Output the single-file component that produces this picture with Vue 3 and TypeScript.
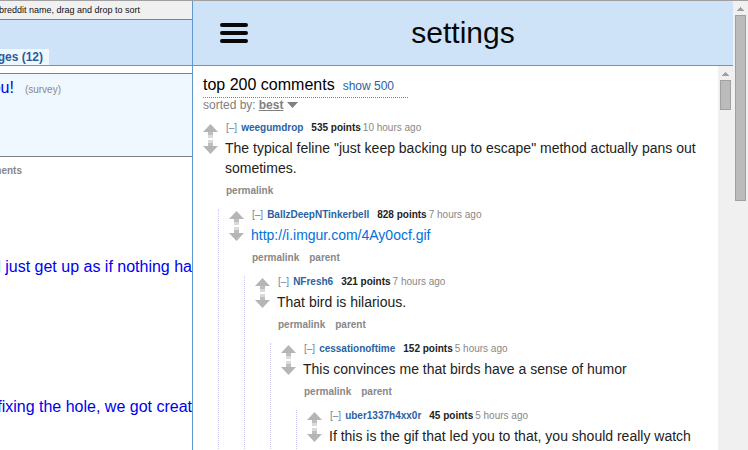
<script setup lang="ts">
interface Comment {
  author: string
  points: number
  age: string
  text: string
  href?: string
}

interface Row extends Comment {
  depth: number
}

const thread: Comment[] = [
  { author: 'weegumdrop', points: 535, age: '10 hours ago', text: 'The typical feline "just keep backing up to escape" method actually pans out sometimes.' },
  { author: 'BallzDeepNTinkerbell', points: 828, age: '7 hours ago', text: 'http://i.imgur.com/4Ay0ocf.gif', href: 'http://i.imgur.com/4Ay0ocf.gif' },
  { author: 'NFresh6', points: 321, age: '7 hours ago', text: 'That bird is hilarious.' },
  { author: 'cessationoftime', points: 152, age: '5 hours ago', text: 'This convinces me that birds have a sense of humor' },
  { author: 'uber1337h4xx0r', points: 45, age: '5 hours ago', text: 'If this is the gif that led you to that, you should really watch' },
]

const rows: Row[] = thread.map((comment, depth) => ({ ...comment, depth }))
</script>

<template>
  <div class="page">
    <section class="listing">
      <div class="hint"><span>breddit name, drag and drop to sort</span></div>
      <div class="tabs"><a class="tab" href="#">ges (12)</a></div>
      <div class="promo">
        <a class="title" href="#">ou!</a>
        <span class="domain">(survey)</span>
      </div>
      <div class="posts">
        <a class="count" href="#">ments</a>
        <a class="title post" href="#">l just get up as if nothing ha</a>
        <a class="title post" href="#">fixing the hole, we got creat</a>
      </div>
    </section>

    <main class="panel">
      <header class="bar">
        <button class="menu" type="button" aria-label="Menu">
          <svg width="28" height="20" viewBox="0 0 28 20">
            <path d="M2 2H26M2 10H26M2 18H26" stroke="#080808" stroke-width="4" stroke-linecap="round" />
          </svg>
        </button>
        <h1>settings</h1>
      </header>
      <div class="viewport">
        <div class="comments">
          <div class="summary">
            <h2>top 200 comments</h2>
            <a href="#">show 500</a>
          </div>
          <div class="sort">
            sorted by: <button type="button"><b>best</b><svg width="11" height="6" viewBox="0 0 11 6"><path d="M0 0H11L5.500 6Z" fill="#808080" /></svg></button>
          </div>
          <div class="thread">
            <div class="guides">
              <span v-for="n in 4" :key="n" class="guide" :class="'start-' + n"></span>
            </div>
            <article v-for="row in rows" :key="row.author" class="comment" :style="{ marginLeft: row.depth * 26 + 'px' }">
              <div class="votes">
                <button type="button" aria-label="Upvote">
                  <svg width="15" height="14" viewBox="0 0 15 14"><path d="M7.500 0L15 8H0Z" fill="#b5b5b5" /><path d="M5 8H10V11H5Z" fill="#bebebe" /><path d="M5 11H10V14H5Z" fill="#dadada" /></svg>
                </button>
                <button type="button" aria-label="Downvote">
                  <svg width="15" height="14" viewBox="0 0 15 14"><path d="M7.500 14L15 6H0Z" fill="#b5b5b5" /><path d="M5 3H10V6H5Z" fill="#bebebe" /><path d="M5 0H10V3H5Z" fill="#dadada" /></svg>
                </button>
              </div>
              <div class="entry">
                <div class="meta">
                  <a class="collapse" href="#">[–]</a>
                  <a class="author" href="#">{{ row.author }}</a>
                  <b>{{ row.points }} points</b>
                  <span>{{ row.age }}</span>
                </div>
                <p><a v-if="row.href" :href="row.href">{{ row.text }}</a><template v-else>{{ row.text }}</template></p>
                <div class="actions">
                  <a href="#">permalink</a>
                  <a v-if="row.depth > 0" href="#">parent</a>
                </div>
              </div>
            </article>
          </div>
        </div>
        <div class="scrollbar">
          <svg width="7" height="4" viewBox="0 0 7 4"><path d="M3 0H4V1H5V2H6V3H7V4H0V3H1V2H2V1H3Z" fill="#a0a0a0" /></svg>
          <span class="thumb short"></span>
        </div>
      </div>
    </main>

    <div class="scrollbar outer">
      <svg width="7" height="4" viewBox="0 0 7 4"><path d="M3 0H4V1H5V2H6V3H7V4H0V3H1V2H2V1H3Z" fill="#a0a0a0" /></svg>
      <span class="thumb long"></span>
    </div>
  </div>
</template>

<style>
body {
  overflow: hidden;
}
</style>

<style scoped>
.page {
  display: flex;
  box-sizing: border-box;
  height: 100vh;
  overflow: hidden;
  border-top: 1px solid #a0a0a0;
  background: #fff;
  color: #222;
  font-family: "Liberation Sans", Arial, sans-serif;
}
a {
  color: inherit;
  text-decoration: none;
}
button {
  padding: 0;
  border: 0;
  background: none;
  color: inherit;
  font: inherit;
  cursor: pointer;
}
svg {
  display: block;
}
.listing {
  flex: 0 0 192px;
  min-width: 0;
  overflow: hidden;
  white-space: nowrap;
}
.hint {
  display: flex;
  justify-content: flex-end;
  height: 18px;
  padding-right: 52px;
  border-bottom: 1px solid #808080;
  background: #f0f0f0;
  color: #111;
  font-size: 9px;
  line-height: 18px;
}
.tabs {
  display: flex;
  align-items: flex-end;
  justify-content: flex-end;
  height: 45px;
  padding-right: 143px;
  border-bottom: 1px solid #5f99cf;
  background: #cee3f8;
}
.tab {
  padding: 1px 6px 0;
  background: #eff7ff;
  color: #2a5d9c;
  font-size: 12px;
  font-weight: bold;
  line-height: 15px;
}
.promo {
  display: flex;
  align-items: baseline;
  justify-content: flex-end;
  gap: 11px;
  box-sizing: border-box;
  height: 84px;
  margin-top: 7px;
  padding: 4px 131px 0 0;
  border-top: 1px solid #808080;
  border-bottom: 1px solid #808080;
  background: #eff7ff;
}
.title {
  color: #0000ee;
  font-size: 16px;
  line-height: 20px;
}
.domain {
  color: #888;
  font-size: 10px;
}
.posts {
  display: flex;
  flex-direction: column;
  align-items: flex-end;
  padding-top: 7px;
}
.count {
  margin-right: 170px;
  color: #888;
  font-size: 10px;
  font-weight: bold;
  line-height: 13px;
}
.post {
  margin-top: 80px;
  margin-bottom: 40px;
}
.panel {
  display: flex;
  flex: 1;
  flex-direction: column;
  min-width: 0;
  border-left: 1px solid #5f99cf;
}
.bar {
  display: grid;
  flex: none;
  grid-template-columns: 82px 1fr 82px;
  align-items: center;
  height: 64px;
  border-bottom: 1px solid #5f99cf;
  background: #cee3f8;
}
.menu {
  justify-self: center;
}
.bar h1 {
  margin: 0;
  color: #080808;
  font-size: 30px;
  font-weight: normal;
  line-height: 34px;
  text-align: center;
}
.viewport {
  display: flex;
  flex: 1;
  min-height: 0;
}
.comments {
  flex: 1;
  min-width: 0;
  padding: 8px 15px 0 10px;
  overflow: hidden;
}
.summary {
  display: flex;
  align-items: baseline;
  gap: 8px;
  width: 205px;
  height: 23px;
  border-bottom: 1px dotted #808080;
}
.summary h2 {
  margin: 0;
  color: #000;
  font-size: 16px;
  font-weight: normal;
  line-height: 22px;
}
.summary a {
  color: #2a62a4;
  font-size: 12px;
}
.sort {
  display: flex;
  gap: 3px;
  color: #808080;
  font-size: 12px;
  line-height: 14px;
}
.sort button {
  display: flex;
  align-items: center;
  gap: 4px;
}
.sort b {
  text-decoration: underline;
}
.thread {
  position: relative;
  padding-top: 10px;
}
.guides {
  display: flex;
  position: absolute;
  inset: 97px auto 0 15px;
  gap: 25px;
  height: 100vh;
}
.guide {
  border-left: 1px dotted #c8c8f0;
}
.start-2 {
  margin-top: 67px;
}
.start-3 {
  margin-top: 134px;
}
.start-4 {
  margin-top: 201px;
}
.comment {
  display: flex;
  gap: 7px;
  margin-bottom: 12px;
}
.votes {
  display: flex;
  flex-direction: column;
  gap: 2px;
  height: 32px;
  padding-top: 2px;
}
.entry {
  flex: 1;
  min-width: 0;
}
.meta {
  display: flex;
  gap: 2px;
  height: 11px;
  padding-left: 1px;
  color: #888;
  font-size: 10px;
  line-height: 11px;
  white-space: nowrap;
}
.meta .collapse {
  color: #7080a0;
}
.meta .author {
  margin: 0 6px 0 2px;
  color: #2a62a4;
  font-weight: bold;
}
.meta b {
  color: #222;
}
.entry p {
  margin: 5px 0 6px;
  font-size: 14px;
  line-height: 20px;
}
.entry p a {
  color: #0071dd;
}
.actions {
  display: flex;
  gap: 10px;
  padding-left: 1px;
  color: #888;
  font-size: 10px;
  font-weight: bold;
  line-height: 13px;
}
.scrollbar {
  display: flex;
  flex: 0 0 15px;
  flex-direction: column;
  align-items: center;
  gap: 4px;
  box-sizing: border-box;
  padding-top: 6px;
  background: #f0f0f0;
}
.thumb {
  box-sizing: border-box;
  width: 11px;
  border: 1px solid #a0a0a0;
  background: #bbb;
}
.short {
  height: 30px;
}
.long {
  height: 186px;
}
</style>
